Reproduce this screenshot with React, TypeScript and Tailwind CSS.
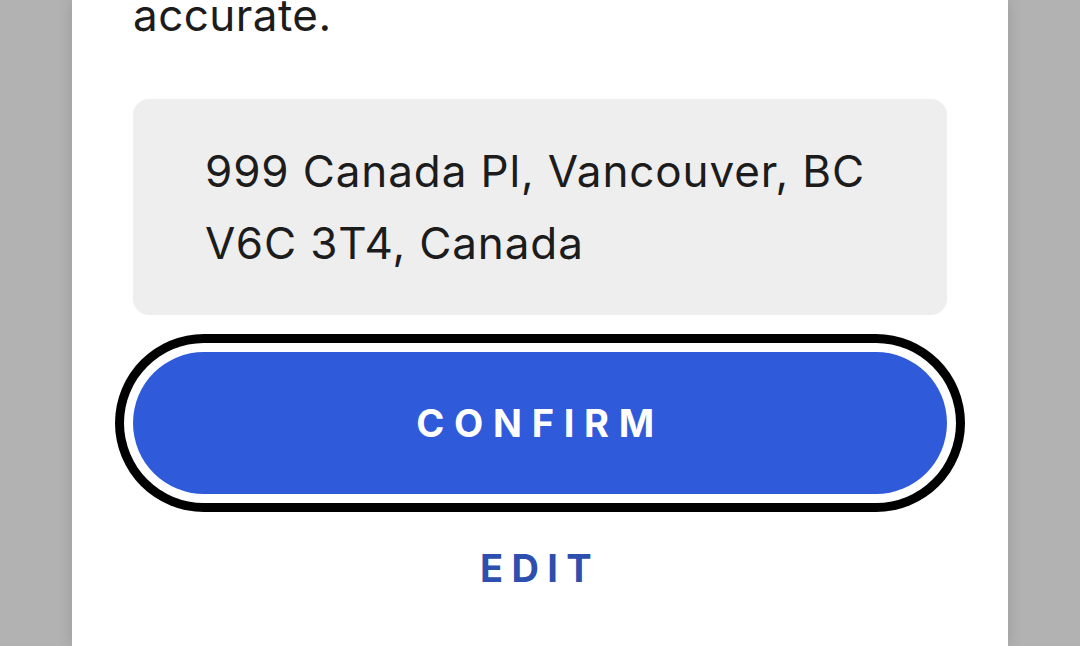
import React from 'react';

const address = ['999 Canada Pl, Vancouver, BC', 'V6C 3T4, Canada'];

const ConfirmAddress: React.FC = () => {
  return (
    <div className="h-[646px] w-full overflow-hidden bg-[#b2b2b2] flex justify-center font-['Inter',sans-serif]">
      <div className="w-[936px] h-full bg-white px-[61px] shadow-[0_0_14px_rgba(0,0,0,0.14)] flex flex-col">
        {/* tail of the intro copy */}
        <p className="mt-[-14px] text-[44px] leading-[58px] tracking-[0.01em] text-[#1c1c1c]">
          accurate.
        </p>

        {/* address preview */}
        <div className="mt-[55px] rounded-2xl bg-[#eeeeee] px-[72px] py-[36px] text-[44px] leading-[72px] tracking-[0.02em] text-[#1c1c1c]">
          {address.map((line) => (
            <div key={line}>{line}</div>
          ))}
        </div>

        <button className="mt-[37px] h-[142px] w-full rounded-full bg-[#2f5bdb] text-white text-[38px] font-bold tracking-[0.255em] ring-[9px] ring-black ring-offset-[9px] ring-offset-white">
          CONFIRM
        </button>

        <button className="mt-[46px] self-center text-[38px] font-bold tracking-[0.22em] text-[#2d4fae]">
          EDIT
        </button>
      </div>
    </div>
  );
};

export default ConfirmAddress;
